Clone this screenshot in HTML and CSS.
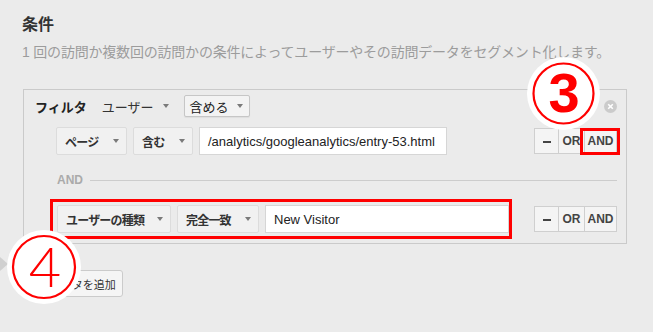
FILE: index.html
```html
<!DOCTYPE html>
<html lang="ja">

<head>
  <meta charset="UTF-8">
  <title>条件</title>
  <link rel="stylesheet" href="styles.css">
</head>

<body>
  <div class="page">
    <h1 class="title">条件</h1>
    <p class="desc">1 回の訪問か複数回の訪問かの条件によってユーザーやその訪問データをセグメント化します。</p>

    <div class="panel">
      <div class="filter-head">
        <div class="head-left">
          <b class="filter-label">フィルタ</b>
          <span class="plain-select">ユーザー <i class="caret"></i></span>
          <span class="btn-select">含める <i class="caret"></i></span>
        </div>
        <svg class="close" width="13" height="13" viewBox="0 0 13 13">
          <circle cx="6.5" cy="6.5" r="6.5" fill="#cbcbcb" />
          <path d="M4.2 4.2 L8.8 8.8 M8.8 4.2 L4.2 8.8" stroke="#fff" stroke-width="1.6" />
        </svg>
      </div>

      <div class="cond-row first">
        <div class="fields">
          <span class="drop w-page">ページ <i class="caret"></i></span>
          <span class="drop w-has">含む <i class="caret"></i></span>
          <span class="val">/analytics/googleanalytics/entry-53.html</span>
        </div>
        <div class="ops">
          <span class="op op-minus"><i class="bar"></i></span>
          <span class="op op-or">OR</span>
          <span class="op op-and marked">AND</span>
        </div>
      </div>

      <div class="and-sep">AND</div>

      <div class="cond-row second">
        <div class="fields boxed">
          <span class="drop w-type">ユーザーの種類 <i class="caret"></i></span>
          <span class="drop w-exact">完全一致 <i class="caret"></i></span>
          <span class="val short">New Visitor</span>
        </div>
        <div class="ops">
          <span class="op op-minus"><i class="bar"></i></span>
          <span class="op op-or">OR</span>
          <span class="op op-and">AND</span>
        </div>
      </div>
    </div>

    <div class="foot">
      <i class="tri"></i>
      <span class="add-btn"><i class="plus"></i>フィルタを追加</span>
    </div>
  </div>

  <!-- annotation marks -->
  <svg class="mark mark-3" width="73" height="73" viewBox="0 0 73 73">
    <circle cx="36.5" cy="36.5" r="36.5" fill="#fff" />
    <circle cx="36.5" cy="36.5" r="30" fill="none" stroke="#f00" stroke-width="2.2" />
    <text x="37" y="55" text-anchor="middle" class="num-3">3</text>
  </svg>
  <svg class="mark mark-4" width="74" height="74" viewBox="0 0 74 74">
    <circle cx="37" cy="37" r="37" fill="#fff" />
    <circle cx="37" cy="37" r="31" fill="none" stroke="#f00" stroke-width="2.2" />
    <text x="38" y="57" text-anchor="middle" class="num-4">4</text>
  </svg>
</body>

</html>
```

FILE: styles.css
```css
body {
  margin: 0;
  background-color: #ebebeb;
  font-family: 'Liberation Sans', 'Noto Sans CJK JP', sans-serif;
  color: #333;
}

.page {
  padding: 15px 0 0 22px;
}

.title {
  margin: 0;
  font-size: 16px;
  line-height: 20px;
  font-weight: bold;
  color: #333;
}

.desc {
  margin: 7px 0 0;
  font-size: 14px;
  line-height: 20px;
  color: #9c9c9c;
  letter-spacing: -0.2px;
  white-space: nowrap;
}

.panel {
  margin: 27px 0 0 1px;
  width: 604px;
  box-sizing: border-box;
  border: 1px solid #cacaca;
  padding: 5px 9px 10px 11px;
}

.filter-head {
  display: flex;
  justify-content: space-between;
  align-items: center;
  height: 22px;
}

.head-left {
  display: flex;
  align-items: center;
}

.filter-label {
  font-size: 13px;
  color: #222;
  margin-right: 15px;
}

.plain-select {
  display: flex;
  align-items: center;
  gap: 9px;
  font-size: 13px;
  color: #333;
  margin-right: 15px;
}

.btn-select {
  display: flex;
  align-items: center;
  gap: 8px;
  height: 22px;
  box-sizing: border-box;
  padding: 0 6px 0 5px;
  border: 1px solid #c6c6c6;
  border-radius: 2px;
  background-color: #f3f3f3;
  box-shadow: 0 1px 1px rgba(0, 0, 0, 0.06);
  font-size: 13px;
  color: #222;
}

.caret {
  display: block;
  width: 0;
  height: 0;
  border-left: 3.5px solid transparent;
  border-right: 3.5px solid transparent;
  border-top: 4px solid #7a7a7a;
}

.close {
  display: block;
}

.cond-row {
  display: flex;
  justify-content: space-between;
  align-items: center;
}

.cond-row.first {
  margin-top: 10px;
  padding-left: 21px;
}

.cond-row.second {
  margin-top: 17px;
  padding-left: 22px;
}

.fields {
  display: flex;
  gap: 6px;
  position: relative;
}

.fields.boxed::after {
  content: '';
  position: absolute;
  left: -7px;
  top: -6px;
  right: -3px;
  bottom: -6px;
  border: 3px solid #f00;
}

.drop {
  display: flex;
  align-items: center;
  justify-content: space-between;
  height: 28px;
  box-sizing: border-box;
  padding: 0 7px 0 8px;
  border: 1px solid #dcdcdc;
  border-radius: 2px;
  background-color: #f1f1f1;
  font-size: 12px;
  font-weight: bold;
  letter-spacing: -0.8px;
  color: #333;
}

.w-page {
  width: 71px;
}

.w-has {
  width: 60px;
}

.w-type {
  width: 114px;
}

.w-exact {
  width: 82px;
}

.val {
  display: flex;
  align-items: center;
  width: 248px;
  height: 28px;
  box-sizing: border-box;
  padding: 0 8px;
  border: 1px solid #d6d6d6;
  background-color: #fff;
  font-size: 13px;
  color: #222;
}

.val.short {
  width: 244px;
}

.ops {
  display: flex;
  height: 26px;
}

.op {
  display: flex;
  align-items: center;
  justify-content: center;
  box-sizing: border-box;
  height: 26px;
  border: 1px solid #cfcfcf;
  background-color: #f4f4f4;
  font-size: 12px;
  font-weight: bold;
  color: #444;
  position: relative;
}

.op + .op {
  margin-left: -1px;
}

.op-minus {
  width: 25px;
}

.op-or {
  width: 27px;
}

.op-and {
  width: 33px;
}

.bar {
  display: block;
  width: 8px;
  height: 2px;
  margin-top: 2px;
  background-color: #444;
}

.op.marked::after {
  content: '';
  position: absolute;
  left: -5px;
  top: -1px;
  right: -4px;
  bottom: -2px;
  border: 3px solid #f00;
}

.and-sep {
  display: flex;
  align-items: center;
  gap: 7px;
  height: 16px;
  margin: 17px 0 0 22px;
  font-size: 12px;
  font-weight: bold;
  color: #aaa;
}

.and-sep::after {
  content: '';
  flex: 1;
  height: 1px;
  background-color: #cccccc;
}

.foot {
  display: flex;
  align-items: flex-start;
  margin: 13px 0 0 -22px;
}

.tri {
  display: block;
  width: 0;
  height: 0;
  border-top: 7.5px solid transparent;
  border-bottom: 7.5px solid transparent;
  border-left: 8px solid #d0d0d0;
}

.add-btn {
  display: flex;
  align-items: center;
  gap: 4px;
  margin: 13px 0 0 14px;
  height: 27px;
  width: 101px;
  box-sizing: border-box;
  padding: 0 0 0 5px;
  border: 1px solid #cbcbcb;
  border-radius: 3px;
  background-color: #f5f5f5;
  font-size: 11px;
  color: #333;
  white-space: nowrap;
}

.plus {
  display: block;
  width: 7px;
  height: 7px;
  background:
    linear-gradient(#555, #555) center / 7px 2px no-repeat,
    linear-gradient(#555, #555) center / 2px 7px no-repeat;
}

.mark {
  position: absolute;
}

.mark-3 {
  left: 527px;
  top: 57px;
}

.mark-4 {
  left: 7px;
  top: 230px;
}

.num-3 {
  font-family: 'Liberation Sans', sans-serif;
  font-size: 56px;
  font-weight: bold;
  fill: #f00;
}

.num-4 {
  font-family: 'Lato', 'Liberation Sans', sans-serif;
  font-size: 56px;
  font-weight: 300;
  fill: #f00;
}
```
